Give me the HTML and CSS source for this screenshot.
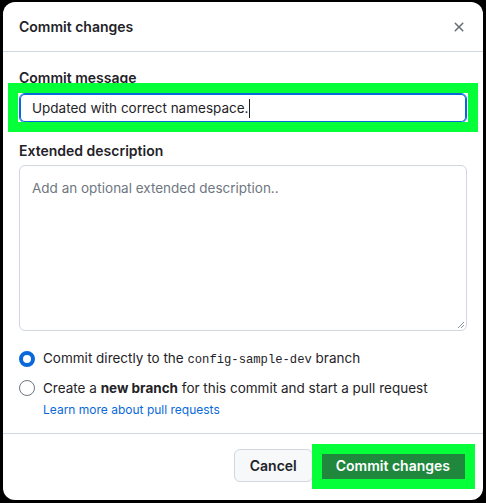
FILE: index.html
```html
<!DOCTYPE html>
<html lang="en">
<head>
<meta charset="utf-8">
<title>Commit changes</title>
<link rel="stylesheet" href="styles.css">
</head>
<body>
<div class="dialog">
  <div class="dialog-header">
    <h2 class="dialog-title">Commit changes</h2>
    <button class="close-btn" aria-label="Close">
      <svg width="16" height="16" viewBox="0 0 16 16"><path d="M3.72 3.72a.75.75 0 0 1 1.06 0L8 6.94l3.22-3.220a.749.749 0 0 1 1.275.326.749.749 0 0 1-.215.734L9.06 8l3.22 3.22a.749.749 0 0 1-.326 1.275.749.749 0 0 1-.734-.215L8 9.06l-3.22 3.22a.751.751 0 0 1-1.042-.018.751.751 0 0 1-.018-1.042L6.94 8 3.720 4.78a.75.75 0 0 1 0-1.06Z" fill="currentColor"/></svg>
    </button>
  </div>
  <div class="dialog-body">
    <label class="field-label">Commit message</label>
    <div class="hl hl-input">
      <div class="text-input">Updated with correct namespace.<span class="caret"></span></div>
    </div>
    <label class="field-label second">Extended description</label>
    <div class="textarea">
      <span class="placeholder">Add an optional extended description..</span>
      <svg class="grip" width="8" height="8" viewBox="0 0 8 8"><path d="M7 1L1 7M7 4L4 7" stroke="#8c959f" stroke-width="1"/></svg>
    </div>
    <div class="radios">
      <div class="radio-row">
        <span class="radio checked"></span>
        <span class="radio-label">Commit directly to the <code>config-sample-dev</code> branch</span>
      </div>
      <div class="radio-row">
        <span class="radio"></span>
        <span class="radio-label">Create a <strong>new branch</strong> for this commit and start a pull request</span>
      </div>
      <a class="learn-link" href="#">Learn more about pull requests</a>
    </div>
  </div>
  <div class="dialog-footer">
    <button class="btn btn-default">Cancel</button>
    <div class="hl hl-btn">
      <button class="btn btn-primary">Commit changes</button>
    </div>
  </div>
</div>
</body>
</html>
```

FILE: styles.css
```css
* { box-sizing: border-box; }
html, body { margin: 0; padding: 0; }
body {
  background: #000;
  width: 486px;
  height: 503px;
  font-family: "Inter", "Liberation Sans", sans-serif;
  color: #1f2328;
  font-size: 13.5px;
  overflow: hidden;
}
.dialog {
  margin: 2px 3px 0 3px;
  width: 480px;
  height: 498px;
  background: #fff;
  border-radius: 12px;
  display: flex;
  flex-direction: column;
}
.dialog-header {
  display: flex;
  align-items: center;
  justify-content: space-between;
  padding: 15px 16px 14px 16px;
  border-bottom: 1px solid #d0d7de;
}
.dialog-title {
  margin: 0;
  font-size: 14px;
  line-height: 20px;
  font-weight: 600;
}
.close-btn {
  border: 0;
  background: none;
  padding: 0;
  color: #656d76;
  display: flex;
  width: 16px;
  height: 16px;
}
.dialog-body {
  padding: 16px 16px 14px 16px;
  display: flex;
  flex-direction: column;
}
.field-label {
  display: block;
  font-size: 14px;
  font-weight: 600;
  line-height: 20px;
  margin-bottom: 5px;
}
.field-label.second { margin-top: 18px; margin-bottom: 4px; }
.hl { position: relative; }
.hl::after {
  content: "";
  position: absolute;
  border: 10px solid #05ff38;
  pointer-events: none;
}
.hl-input::after { top: -10px; bottom: -9px; left: -11px; right: -11px; }
.hl-btn::after { top: -5px; bottom: -7px; left: -7px; right: -8px; }
.text-input {
  height: 30px;
  border: 1px solid #0969da;
  box-shadow: inset 0 0 0 1px #0969da;
  border-radius: 6px;
  padding: 0 12px;
  line-height: 28px;
  display: flex;
  align-items: center;
}
.caret {
  display: inline-block;
  width: 1px;
  height: 19px;
  background: #1f2328;
  margin-left: 1px;
}
.textarea {
  position: relative;
  height: 166px;
  border: 1px solid #d0d7de;
  border-radius: 6px;
  padding: 12px 12px;
  line-height: 20px;
}
.placeholder { color: #6e7781; }
.grip { position: absolute; right: 1px; bottom: 1px; }
.radios {
  margin-top: 17px;
  display: flex;
  flex-direction: column;
}
.radio-row {
  display: flex;
  align-items: center;
  gap: 8px;
  line-height: 20px;
  margin-bottom: 8px;
}
.radio-row + .radio-row { margin-bottom: 3px; }
.radio {
  width: 16px;
  height: 16px;
  border-radius: 50%;
  border: 1px solid #6e7781;
  background: #fff;
  flex: none;
}
.radio.checked { border: 4px solid #0969da; }
code {
  font-family: "Liberation Mono", "DejaVu Sans Mono", monospace;
  font-size: 12.2px;
}
.learn-link {
  margin-left: 24px;
  font-size: 12px;
  line-height: 18px;
  color: #0969da;
  text-decoration: none;
}
.dialog-footer {
  border-top: 1px solid #d0d7de;
  padding: 15px 16px 16px 16px;
  display: flex;
  justify-content: flex-end;
  gap: 6px;
}
.btn {
  font-family: inherit;
  font-size: 14px;
  font-weight: 600;
  height: 33px;
  padding: 0 15px;
  border-radius: 6px;
  line-height: 20px;
  cursor: pointer;
}
.btn-default {
  background: #f6f8fa;
  border: 1px solid #d0d7de;
  color: #1f2328;
}
.btn-primary {
  background: #1f883d;
  border: 1px solid rgba(31,35,40,0.15);
  color: #fff;
  display: block;
  padding: 0 16px;
}
```
